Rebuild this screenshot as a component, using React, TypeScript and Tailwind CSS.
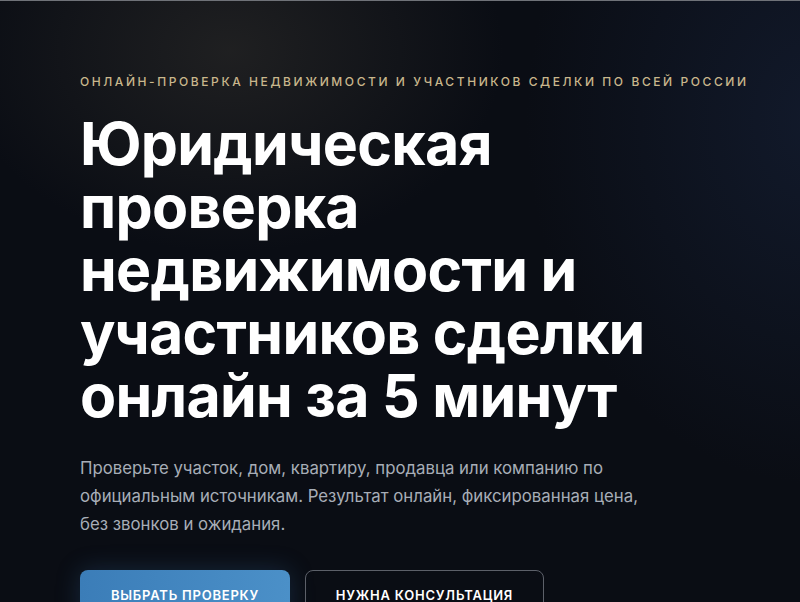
import React from 'react';

const App: React.FC = () => {
  return (
    <div
      className="relative min-h-[602px] w-full overflow-hidden border-t border-[#6f7278] bg-[#0a0d14] text-white"
      style={{ fontFamily: 'Inter, "Noto Sans", sans-serif' }}
    >
      {/* Decorative glows */}
      <div className="pointer-events-none absolute inset-0 bg-[radial-gradient(ellipse_380px_280px_at_230px_50px,rgba(52,50,46,0.5),transparent_72%)]" />
      <div className="pointer-events-none absolute inset-0 bg-[radial-gradient(ellipse_420px_520px_at_820px_120px,rgba(24,36,62,0.55),transparent_70%)]" />

      <section className="relative px-20 pt-[73px]">
        <p className="whitespace-nowrap text-[12px] leading-4 font-medium tracking-[0.215em] text-[#c9b78c] uppercase">
          Онлайн-проверка недвижимости и участников сделки по всей России
        </p>

        <h1 className="mt-[22px] text-[59px] leading-[63px] font-bold tracking-[-0.012em] text-white">
          Юридическая
          <br />
          проверка
          <br />
          недвижимости и
          <br />
          участников сделки
          <br />
          онлайн за 5 минут
        </h1>

        <p className="mt-[27px] max-w-[600px] text-[16.8px] leading-7 text-[#a7adb7]">
          Проверьте участок, дом, квартиру, продавца или компанию по
          <br />
          официальным источникам. Результат онлайн, фиксированная цена,
          <br />
          без звонков и ожидания.
        </p>

        <div className="mt-[32px] flex gap-[15px]">
          <button className="h-[52px] w-[210px] rounded-lg bg-gradient-to-r from-[#3b7db8] to-[#4b90c8] text-[13px] font-semibold tracking-[0.06em] text-white uppercase shadow-[0_0_24px_rgba(59,125,184,0.25)]">
            Выбрать проверку
          </button>
          <button className="h-[52px] w-[239px] rounded-lg border border-[#5c6069] bg-transparent text-[13px] font-semibold tracking-[0.06em] text-white uppercase">
            Нужна консультация
          </button>
        </div>
      </section>
    </div>
  );
};

export default App;
